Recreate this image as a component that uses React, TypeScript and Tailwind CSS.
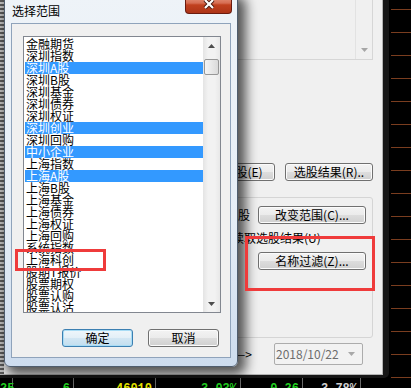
import clsx from "clsx";

const cjk = "font-['Noto_Sans_CJK_SC',sans-serif]";

const ranges = [
  "金融期货", "深圳指数", "深圳A股", "深圳B股", "深圳基金", "深圳债券",
  "深圳权证", "深圳创业", "深圳回购", "中小企业", "上海指数", "上海A股",
  "上海B股", "上海基金", "上海债券", "上海权证", "上海回购", "系统指数",
  "上海科创", "股期T报价", "股票期权", "股票认购", "股票认沽",
];
const selected = [2, 7, 9, 11];

const quotes = [
  { w: "w-[13px]", text: "25", color: "text-[#22d022]" },
  { w: "w-[61px]", text: "6", color: "text-[#22d022]" },
  { w: "w-[82px]", text: "46010", color: "text-[#e6e600]" },
  { w: "w-[85px]", text: "3.03%", color: "text-[#22d022]" },
  { w: "w-[62px]", text: "0.26", color: "text-[#22d022]" },
  { w: "w-[58px]", text: "3.78%", color: "text-[#d0d0d0]" },
];

function Arrow({ up, color }: { up?: boolean; color: string }) {
  return (
    <svg width="7" height="4" viewBox="0 0 7 4">
      <polygon points={up ? "0,4 7,4 3.5,0" : "0,0 7,0 3.5,4"} fill={color} />
    </svg>
  );
}

function WinButton({ label, isDefault, className }: { label: string; isDefault?: boolean; className?: string }) {
  return (
    <div
      className={clsx(
        "flex h-[18px] shrink-0 items-center justify-center rounded-[3px] border text-[12px] leading-[12px] text-black whitespace-nowrap",
        cjk,
        isDefault
          ? "border-[#3c7fb1] bg-[linear-gradient(180deg,#eef6fb_0%,#e2eff7_50%,#d2e6f3_51%,#c2deef_100%)] shadow-[inset_0_0_0_1px_#a8dcf5]"
          : "border-[#707070] bg-[linear-gradient(180deg,#f3f3f3_0%,#ebebeb_50%,#dddddd_51%,#d0d0d0_100%)] shadow-[inset_0_0_0_1px_#fbfbfb]",
        className
      )}
    >
      {label}
    </div>
  );
}

function MainWindow() {
  return (
    <div className="h-[378px] w-[389px] shrink-0 rounded-br-[5px] bg-[#171717] pr-[6px] pb-[3px]">
      <div className="flex h-full border-r border-b border-[#b4b4b4] bg-[#f0f0f0]">
        <div className="w-[4px] shrink-0 bg-[repeating-linear-gradient(180deg,#5c5c5c_0px,#5c5c5c_2px,#c4c4c4_2px,#c4c4c4_4px)]" />
        <div className="flex-1" />
        <div className={clsx("flex w-[223px] shrink-0 flex-col text-[12px] leading-[12px] text-black", cjk)}>
          <div className="mt-[-2px] flex h-[62px] justify-end border-r border-b border-[#d6d6d6]">
            <div className="flex w-[17px] flex-col items-center justify-end border-l border-[#e2e2e2] pb-[7px]">
              <Arrow color="#a6a6a6" />
            </div>
          </div>

          <div className="mt-[103px] flex justify-end gap-[10px]">
            <WinButton label="执行选股(E)" className="w-[88px]" />
            <WinButton label="选股结果(R).." className="w-[88px]" />
          </div>

          <div className="mt-[16px] flex h-[141px] flex-col rounded-[3px] border border-[#d5d5d5] pr-[6px]">
            <div className="mt-[8px] flex items-center justify-end gap-[8px]">
              <span className="whitespace-nowrap">范围：全部A股</span>
              <WinButton label="改变范围(C)..." className="w-[108px]" />
            </div>
            <div className="mt-[8px] h-[12px] whitespace-nowrap pl-[81px]">读取选股结果(U)</div>
            <WinButton label="名称过滤(Z)..." className="mt-[8px] w-[108px] self-end" />
          </div>

          <div className="mt-[5px] flex h-[22px] items-center justify-end pr-[10px]">
            <span className="whitespace-nowrap">—&gt;</span>
            <div className="ml-[22px] flex h-[22px] w-[89px] items-center justify-between rounded-[2px] border border-[#acacac] bg-[#f2f2f2] pr-[7px] pl-[1px] text-[#6d6d6d]">
              <span>2018/10/22</span>
              <Arrow color="#a8a8a8" />
            </div>
          </div>
        </div>
        <div className="w-[9px] shrink-0" />
      </div>
    </div>
  );
}

function RangeDialog() {
  return (
    <div className="absolute left-[4px] top-[-6px] flex h-[373px] w-[234px] flex-col rounded-[6px] border border-[#4f5d6e] bg-[linear-gradient(180deg,#eef3f8_0%,#e5edf6_60%,#cddcee_100%)] px-[6px] pb-[8px] shadow-[5px_5px_12px_3px_rgba(0,0,0,0.65)]">
      <div className="relative h-[28px] shrink-0">
        <span className={clsx("absolute left-[1px] top-[10px] text-[12px] leading-[12px] text-black", cjk)}>选择范围</span>
        <div className="absolute right-[-1px] top-0 flex h-[19px] w-[47px] items-start justify-center rounded-b-[4px] border border-t-0 border-[#6a1b0f] bg-[linear-gradient(180deg,#e9a28c_0%,#d66d52_45%,#c1411f_55%,#ad3418_100%)] pt-[4px]">
          <svg width="12" height="10" viewBox="0 0 12 10">
            <path d="M2 1 L10 9 M10 1 L2 9" stroke="#4a1a12" strokeWidth="4" />
            <path d="M2 1 L10 9 M10 1 L2 9" stroke="#ffffff" strokeWidth="2.2" />
          </svg>
        </div>
      </div>

      <div className="flex flex-1 flex-col border border-[#8fa3bb] bg-[#f0f0f0]">
        <div className="mt-[12px] ml-[11px] flex h-[277px] w-[198px] border border-[#828790] bg-white">
          <div className={clsx("min-w-0 flex-1 overflow-hidden pt-[1px] pl-[1px] text-[12px] leading-[12px] text-black", cjk)}>
            {ranges.map((name, i) => (
              <div
                key={name}
                className={clsx(
                  "h-[12px] whitespace-nowrap pl-[1px]",
                  selected.includes(i) && "bg-[#3399ff] text-white"
                )}
              >
                {name}
              </div>
            ))}
          </div>
          <div className="flex w-[17px] shrink-0 flex-col bg-[linear-gradient(90deg,#e4e4e4,#f2f2f2_30%,#f2f2f2_70%,#e8e8e8)]">
            <div className="flex h-[17px] items-center justify-center">
              <Arrow up color="#4d4d4d" />
            </div>
            <div className="mx-[1px] mt-[5px] h-[16px] rounded-[2px] border border-[#979797] bg-[linear-gradient(90deg,#f5f5f5,#e8e8e8_50%,#dadada)]" />
            <div className="flex-1" />
            <div className="flex h-[17px] items-center justify-center">
              <Arrow color="#4d4d4d" />
            </div>
          </div>
        </div>

        <div className="mt-[16px] flex justify-end gap-[15px] pr-[11px]">
          <WinButton label="确定" isDefault className="w-[71px]" />
          <WinButton label="取消" className="w-[71px]" />
        </div>
      </div>
    </div>
  );
}

export default function App() {
  return (
    <div className="relative h-[388px] w-[411px] overflow-hidden bg-black">
      <div className="flex h-[378px]">
        <MainWindow />
        <div className="flex flex-1 flex-col gap-[22px] pt-[9px] pl-[2px]">
          {Array.from({ length: 17 }).map((_, i) => (
            <div key={i} className="h-px shrink-0 bg-[#7a3d1f]" />
          ))}
        </div>
      </div>

      <div className="flex h-[10px]">
        {quotes.map((q) => (
          <div
            key={q.text}
            className={clsx(
              "h-[10px] shrink-0 border-r border-[#6a6a6a] pt-[5px] pr-[3px] text-right font-['Liberation_Mono',monospace] text-[12px] leading-[12px] font-bold",
              q.w,
              q.color
            )}
          >
            {q.text}
          </div>
        ))}
      </div>

      <RangeDialog />

      <div className="absolute left-[15px] top-[249px] h-[22px] w-[91px] border-[3px] border-[#ef3b3b]" />
      <div className="absolute left-[245px] top-[236px] h-[55px] w-[130px] border-[3px] border-[#ef3b3b]" />
    </div>
  );
}
